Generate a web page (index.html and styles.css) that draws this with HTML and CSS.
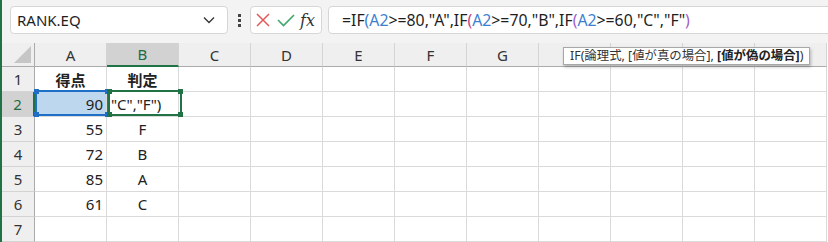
FILE: index.html
```html
<!DOCTYPE html>
<html lang="ja">
<head>
  <meta charset="UTF-8" />
  <title>RANK.EQ</title>
  <link rel="stylesheet" href="styles.css">
</head>
<body>
  <div class="app">
    <div class="toolbar">
      <div class="namebox">
        <span>RANK.EQ</span>
        <svg class="chev" width="12" height="8" viewBox="0 0 12 8"><path d="M1 1.5 L6 6.5 L11 1.5" fill="none" stroke="#333" stroke-width="1.3"/></svg>
      </div>
      <div class="dots"><i></i><i></i><i></i></div>
      <div class="fxbox">
        <svg width="18" height="18" viewBox="0 0 18 18"><path d="M3 3 L15 15 M15 3 L3 15" stroke="#e05a5a" stroke-width="1.5"/></svg>
        <svg width="20" height="18" viewBox="0 0 20 18"><path d="M2 9 L7.5 14.5 L18 4" fill="none" stroke="#3ea86a" stroke-width="1.6"/></svg>
        <span class="fx">fx</span>
      </div>
      <div class="formula">=IF<span class="p1">(</span><span class="ref">A2</span>&gt;=80,"A",IF<span class="p2">(</span><span class="ref">A2</span>&gt;=70,"B",IF<span class="p3">(</span><span class="ref">A2</span>&gt;=60,"C","F"<span class="p3">)</span></div>
    </div>

    <div class="sheet">
      <div class="corner"><span class="tri"></span></div>
      <div class="colhead">A</div>
      <div class="colhead active">B</div>
      <div class="colhead">C</div>
      <div class="colhead">D</div>
      <div class="colhead">E</div>
      <div class="colhead">F</div>
      <div class="colhead">G</div>
      <div class="colhead">H</div>
      <div class="colhead">I</div>
      <div class="colhead">J</div>
      <div class="colhead">K</div>

      <div class="rowhead">1</div>
      <div class="cell center bold">得点</div>
      <div class="cell center bold">判定</div>
      <div class="cell"></div><div class="cell"></div><div class="cell"></div><div class="cell"></div><div class="cell"></div><div class="cell"></div><div class="cell"></div><div class="cell"></div><div class="cell"></div>

      <div class="rowhead active">2</div>
      <div class="cell right ref-fill">90</div>
      <div class="cell editing">"C","F")</div>
      <div class="cell"></div><div class="cell"></div><div class="cell"></div><div class="cell"></div><div class="cell"></div><div class="cell"></div><div class="cell"></div><div class="cell"></div><div class="cell"></div>

      <div class="rowhead">3</div>
      <div class="cell right">55</div>
      <div class="cell center">F</div>
      <div class="cell"></div><div class="cell"></div><div class="cell"></div><div class="cell"></div><div class="cell"></div><div class="cell"></div><div class="cell"></div><div class="cell"></div><div class="cell"></div>

      <div class="rowhead">4</div>
      <div class="cell right">72</div>
      <div class="cell center">B</div>
      <div class="cell"></div><div class="cell"></div><div class="cell"></div><div class="cell"></div><div class="cell"></div><div class="cell"></div><div class="cell"></div><div class="cell"></div><div class="cell"></div>

      <div class="rowhead">5</div>
      <div class="cell right">85</div>
      <div class="cell center">A</div>
      <div class="cell"></div><div class="cell"></div><div class="cell"></div><div class="cell"></div><div class="cell"></div><div class="cell"></div><div class="cell"></div><div class="cell"></div><div class="cell"></div>

      <div class="rowhead">6</div>
      <div class="cell right">61</div>
      <div class="cell center">C</div>
      <div class="cell"></div><div class="cell"></div><div class="cell"></div><div class="cell"></div><div class="cell"></div><div class="cell"></div><div class="cell"></div><div class="cell"></div><div class="cell"></div>

      <div class="rowhead">7</div>
      <div class="cell"></div><div class="cell"></div><div class="cell"></div><div class="cell"></div><div class="cell"></div><div class="cell"></div><div class="cell"></div><div class="cell"></div><div class="cell"></div><div class="cell"></div><div class="cell"></div>

      <div class="refbox"><i class="h tl"></i><i class="h tr"></i><i class="h bl"></i><i class="h br"></i></div>
      <div class="editbox"><i class="g tl"></i><i class="g tr"></i><i class="g bl"></i><i class="g br"></i></div>
      <div class="tip">IF(論理式, [値が真の場合], <b>[値が偽の場合]</b>)</div>
    </div>
  </div>
</body>
</html>
```

FILE: styles.css
```css
body {
  margin: 0;
  background: #f3f3f3;
  font-family: "Noto Sans", "Noto Sans CJK JP", sans-serif;
  color: #222;
  overflow: hidden;
}

.app {
  border-left: 2px solid #217346;
  height: 242px;
  overflow: hidden;
}

.toolbar {
  display: flex;
  align-items: center;
  height: 30px;
  padding: 5px 0 0 8px;
  margin-bottom: 8px;
}

.namebox {
  width: 218px;
  height: 28px;
  background: #fff;
  border: 1px solid #d6d6d6;
  border-radius: 4px;
  display: flex;
  align-items: center;
  justify-content: space-between;
  padding: 0 12px 0 6px;
  box-sizing: border-box;
  font-size: 15px;
  color: #1e1e1e;
}

.dots {
  width: 22px;
  display: flex;
  flex-direction: column;
  align-items: center;
  gap: 2px;
}

.dots i {
  width: 3px;
  height: 3px;
  background: #444;
  display: block;
}

.fxbox {
  width: 72px;
  height: 28px;
  background: #fff;
  border: 1px solid #d6d6d6;
  border-radius: 4px;
  box-sizing: border-box;
  display: flex;
  align-items: center;
  gap: 4px;
  padding-left: 3px;
}

.fx {
  font-family: "DejaVu Serif", "Liberation Serif", serif;
  font-style: italic;
  font-size: 16px;
  color: #333;
}

.formula {
  flex: 1;
  height: 28px;
  margin-left: 6px;
  margin-right: -10px;
  background: #fff;
  border: 1px solid #d6d6d6;
  border-radius: 4px;
  box-sizing: border-box;
  padding-left: 13px;
  line-height: 26px;
  font-size: 15.8px;
  color: #1e1e1e;
  white-space: nowrap;
}

.ref { color: #3b7fd1; }
.p1 { color: #3b7fd1; }
.p2 { color: #c43f83; }
.p3 { color: #9f5ec9; }

.sheet {
  position: relative;
  display: grid;
  grid-template-columns: 33px repeat(11, 72px);
  grid-template-rows: 24px repeat(7, 25px);
  background: #fff;
}

.corner, .colhead, .rowhead {
  background: #efefef;
  color: #333;
  font-size: 15px;
  display: flex;
  align-items: center;
  justify-content: center;
}

.corner {
  border-right: 1px solid #ababab;
  border-bottom: 1px solid #ababab;
  align-items: flex-end;
  justify-content: flex-end;
}

.tri {
  width: 0;
  height: 0;
  border-left: 17px solid transparent;
  border-bottom: 17px solid #c6c6c6;
  margin: 0 3px 3px 0;
}

.colhead {
  border-right: 1px solid #d4d4d4;
  border-bottom: 1px solid #ababab;
}

.colhead.active {
  background: #d2d2d2;
  color: #1e6b3f;
  border-bottom: 2px solid #217346;
}

.rowhead {
  border-right: 1px solid #ababab;
  border-bottom: 1px solid #d4d4d4;
}

.rowhead.active {
  background: #d2d2d2;
  color: #1e6b3f;
  border-right: 2px solid #217346;
}

.cell {
  border-right: 1px solid #dadada;
  border-bottom: 1px solid #dadada;
  font-size: 15px;
  display: flex;
  align-items: center;
  padding: 0 3px;
  white-space: nowrap;
}

.center { justify-content: center; }
.right { justify-content: flex-end; }
.bold { font-weight: bold; }

.ref-fill { background: #bdd7ee; }

.editing { padding-left: 4px; }

.refbox {
  position: absolute;
  left: 33px;
  top: 47px;
  width: 74px;
  height: 26px;
  box-sizing: border-box;
  border: 2px solid #1f6fc6;
}

.editbox {
  position: absolute;
  left: 106px;
  top: 47px;
  width: 74px;
  height: 26px;
  box-sizing: border-box;
  border: 2px solid #217346;
}

.h, .g {
  position: absolute;
  width: 5px;
  height: 5px;
  display: block;
}

.h { background: #1f6fc6; }
.g { background: #217346; }

.tl { left: -3px; top: -3px; }
.tr { right: -3px; top: -3px; }
.bl { left: -3px; bottom: -3px; }
.br { right: -3px; bottom: -3px; }

.tip {
  position: absolute;
  left: 561px;
  top: 4px;
  width: 247px;
  height: 18px;
  box-sizing: border-box;
  background: #fff;
  border: 1px solid #a8a8a8;
  box-shadow: 1px 2px 3px rgba(0, 0, 0, 0.25);
  font-size: 12.4px;
  line-height: 16px;
  padding-left: 6px;
  color: #333;
  white-space: nowrap;
}

.tip b { color: #222; }
```
